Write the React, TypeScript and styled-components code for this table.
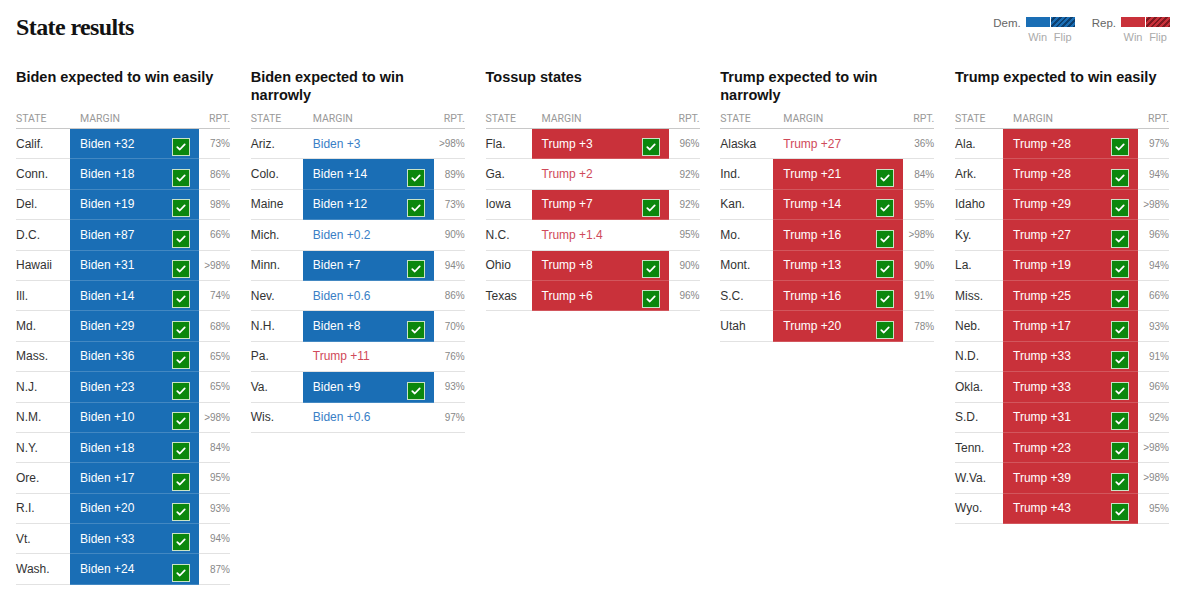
import React from "react";
import styled, { createGlobalStyle } from "styled-components";

const DEM = "#1a6eb5";
const DEM_DARK = "#0d3f6e";
const REP = "#c9313a";
const REP_DARK = "#7d1a20";
const DEM_TEXT = "#3a80c6";
const REP_TEXT = "#d04a5a";

const Global = createGlobalStyle`
  html, body { margin: 0; padding: 0; background: #fff; }
  body { font-family: "Liberation Sans", Arial, sans-serif; color: #333; }
`;

const Page = styled.div`
  width: 1200px;
  box-sizing: border-box;
  padding: 12px 31px 0 16px;
`;

const TopBar = styled.div`
  display: flex;
  justify-content: space-between;
  align-items: flex-start;
  height: 30px;
`;

const Title = styled.h1`
  margin: 0;
  font-family: "Liberation Serif", "Times New Roman", serif;
  font-weight: 700;
  font-size: 24px;
  line-height: 30px;
  letter-spacing: -0.6px;
  color: #121212;
`;

const Legend = styled.div`
  display: flex;
  gap: 17px;
  margin-top: 5px;
  margin-right: -1px;
`;

const LegendGroup = styled.div`
  display: flex;
  align-items: flex-start;
  gap: 5px;
`;

const LegendName = styled.span`
  font-size: 11.5px;
  line-height: 12px;
  color: #666;
`;

const SwatchCol = styled.div`
  display: flex;
  flex-direction: column;
  align-items: center;
  width: 24px;
`;

const Swatches = styled.div`
  display: flex;
  gap: 1px;
`;

const Swatch = styled.div<{ $c: string; $d?: string }>`
  width: 24px;
  height: 10px;
  background: ${(p) =>
    p.$d
      ? `repeating-linear-gradient(135deg, ${p.$c} 0px, ${p.$c} 2px, ${p.$d} 2px, ${p.$d} 4px)`
      : p.$c};
`;

const SwatchLabel = styled.span`
  margin-top: 4px;
  font-size: 11px;
  line-height: 12px;
  color: #aaa;
`;

const Columns = styled.div`
  display: grid;
  grid-template-columns: repeat(5, 214px);
  column-gap: 20.75px;
  margin-top: 26px;
  align-items: start;
`;

const Group = styled.section`
  display: flex;
  flex-direction: column;
`;

const Heading = styled.h2`
  margin: 0;
  min-height: 36px;
  font-size: 14.5px;
  line-height: 18px;
  font-weight: 700;
  color: #121212;
`;

const Row = styled.div<{ $sw: number }>`
  display: grid;
  grid-template-columns: ${(p) => p.$sw}px 1fr 31px;
  height: 30.4px;
  box-sizing: border-box;
  border-bottom: 1px solid #e2e2e2;
  align-items: stretch;
`;

const HeadRow = styled(Row)`
  height: 25px;
  border-bottom: 1px solid #c8c8c8;
`;

const HeadCell = styled.div<{ $right?: boolean; $pad?: boolean }>`
  display: flex;
  align-items: flex-end;
  justify-content: ${(p) => (p.$right ? "flex-end" : "flex-start")};
  padding-bottom: 3px;
  padding-left: ${(p) => (p.$pad ? "10px" : "0")};
  font-family: Roboto, "Liberation Sans", sans-serif;
  font-size: 10.5px;
  line-height: 12px;
  color: #999;
  text-transform: uppercase;
`;

const StateCell = styled.div`
  display: flex;
  align-items: center;
  font-size: 12px;
  color: #333;
`;

const MarginCell = styled.div<{ $fill?: string; $text: string }>`
  display: flex;
  align-items: center;
  justify-content: space-between;
  padding: 0 9px 0 10px;
  font-size: 12px;
  color: ${(p) => (p.$fill ? "#fff" : p.$text)};
  background: ${(p) => p.$fill || "transparent"};
  margin-bottom: ${(p) => (p.$fill ? "-1px" : "0")};
  border-bottom: ${(p) => (p.$fill ? "1px solid rgba(255,255,255,0.18)" : "none")};
`;

const Check = styled.span`
  align-self: flex-end;
  margin-bottom: 2px;
  width: 18px;
  height: 18px;
  box-sizing: border-box;
  background: #0b870d;
  border: 1px solid #c9e3c6;
  display: flex;
  align-items: center;
  justify-content: center;
`;

const PctCell = styled.div`
  display: flex;
  align-items: center;
  justify-content: flex-end;
  font-size: 10px;
  color: #888;
`;

type Entry = [string, string, string, boolean];

type GroupData = { title: string; sw: number; rows: Entry[] };

const groups: GroupData[] = [
  {
    title: "Biden expected to win easily",
    sw: 54,
    rows: [
      ["Calif.", "Biden +32", "73%", true],
      ["Conn.", "Biden +18", "86%", true],
      ["Del.", "Biden +19", "98%", true],
      ["D.C.", "Biden +87", "66%", true],
      ["Hawaii", "Biden +31", ">98%", true],
      ["Ill.", "Biden +14", "74%", true],
      ["Md.", "Biden +29", "68%", true],
      ["Mass.", "Biden +36", "65%", true],
      ["N.J.", "Biden +23", "65%", true],
      ["N.M.", "Biden +10", ">98%", true],
      ["N.Y.", "Biden +18", "84%", true],
      ["Ore.", "Biden +17", "95%", true],
      ["R.I.", "Biden +20", "93%", true],
      ["Vt.", "Biden +33", "94%", true],
      ["Wash.", "Biden +24", "87%", true],
    ],
  },
  {
    title: "Biden expected to win narrowly",
    sw: 52,
    rows: [
      ["Ariz.", "Biden +3", ">98%", false],
      ["Colo.", "Biden +14", "89%", true],
      ["Maine", "Biden +12", "73%", true],
      ["Mich.", "Biden +0.2", "90%", false],
      ["Minn.", "Biden +7", "94%", true],
      ["Nev.", "Biden +0.6", "86%", false],
      ["N.H.", "Biden +8", "70%", true],
      ["Pa.", "Trump +11", "76%", false],
      ["Va.", "Biden +9", "93%", true],
      ["Wis.", "Biden +0.6", "97%", false],
    ],
  },
  {
    title: "Tossup states",
    sw: 46,
    rows: [
      ["Fla.", "Trump +3", "96%", true],
      ["Ga.", "Trump +2", "92%", false],
      ["Iowa", "Trump +7", "92%", true],
      ["N.C.", "Trump +1.4", "95%", false],
      ["Ohio", "Trump +8", "90%", true],
      ["Texas", "Trump +6", "96%", true],
    ],
  },
  {
    title: "Trump expected to win narrowly",
    sw: 53,
    rows: [
      ["Alaska", "Trump +27", "36%", false],
      ["Ind.", "Trump +21", "84%", true],
      ["Kan.", "Trump +14", "95%", true],
      ["Mo.", "Trump +16", ">98%", true],
      ["Mont.", "Trump +13", "90%", true],
      ["S.C.", "Trump +16", "91%", true],
      ["Utah", "Trump +20", "78%", true],
    ],
  },
  {
    title: "Trump expected to win easily",
    sw: 48,
    rows: [
      ["Ala.", "Trump +28", "97%", true],
      ["Ark.", "Trump +28", "94%", true],
      ["Idaho", "Trump +29", ">98%", true],
      ["Ky.", "Trump +27", "96%", true],
      ["La.", "Trump +19", "94%", true],
      ["Miss.", "Trump +25", "66%", true],
      ["Neb.", "Trump +17", "93%", true],
      ["N.D.", "Trump +33", "91%", true],
      ["Okla.", "Trump +33", "96%", true],
      ["S.D.", "Trump +31", "92%", true],
      ["Tenn.", "Trump +23", ">98%", true],
      ["W.Va.", "Trump +39", ">98%", true],
      ["Wyo.", "Trump +43", "95%", true],
    ],
  },
];

const CheckMark = () => (
  <svg width="10" height="8" viewBox="0 0 10 8">
    <path d="M1.3 4.2 L3.8 6.5 L8.7 1.4" fill="none" stroke="#fff" strokeWidth="1.8" strokeLinecap="round" strokeLinejoin="round" />
  </svg>
);

export default function App() {
  return (
    <Page>
      <Global />
      <TopBar>
        <Title>State results</Title>
        <Legend>
          <LegendGroup>
            <LegendName>Dem.</LegendName>
            <Swatches>
              <SwatchCol>
                <Swatch $c={DEM} />
                <SwatchLabel>Win</SwatchLabel>
              </SwatchCol>
              <SwatchCol>
                <Swatch $c={DEM} $d={DEM_DARK} />
                <SwatchLabel>Flip</SwatchLabel>
              </SwatchCol>
            </Swatches>
          </LegendGroup>
          <LegendGroup>
            <LegendName>Rep.</LegendName>
            <Swatches>
              <SwatchCol>
                <Swatch $c={REP} />
                <SwatchLabel>Win</SwatchLabel>
              </SwatchCol>
              <SwatchCol>
                <Swatch $c={REP} $d={REP_DARK} />
                <SwatchLabel>Flip</SwatchLabel>
              </SwatchCol>
            </Swatches>
          </LegendGroup>
        </Legend>
      </TopBar>
      <Columns>
        {groups.map((g) => (
          <Group key={g.title}>
            <Heading>{g.title}</Heading>
            <HeadRow $sw={g.sw}>
              <HeadCell>State</HeadCell>
              <HeadCell $pad>Margin</HeadCell>
              <HeadCell $right>Rpt.</HeadCell>
            </HeadRow>
            {g.rows.map(([st, m, pct, called]) => {
              const dem = m.startsWith("Biden");
              return (
                <Row key={st} $sw={g.sw}>
                  <StateCell>{st}</StateCell>
                  <MarginCell
                    $fill={called ? (dem ? DEM : REP) : undefined}
                    $text={dem ? DEM_TEXT : REP_TEXT}
                  >
                    <span>{m}</span>
                    {called && (
                      <Check>
                        <CheckMark />
                      </Check>
                    )}
                  </MarginCell>
                  <PctCell>{pct}</PctCell>
                </Row>
              );
            })}
          </Group>
        ))}
      </Columns>
    </Page>
  );
}
